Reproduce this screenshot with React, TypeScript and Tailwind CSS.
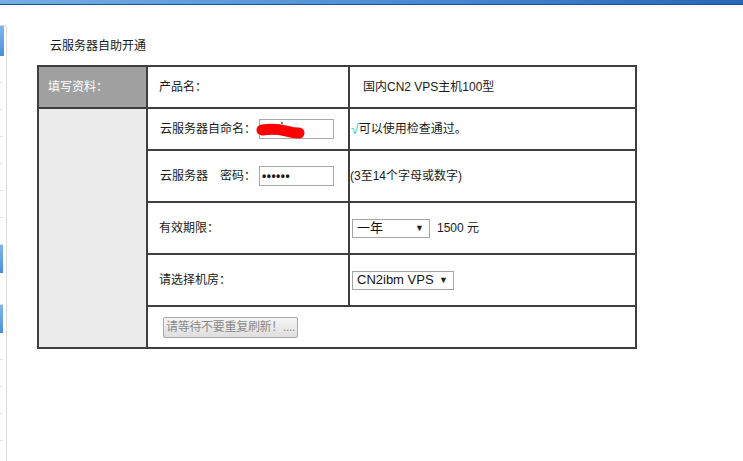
/**
 * App.tsx — 云服务器自助开通 (self-service VPS order form)
 */

const FONT = "font-['Liberation_Sans','Noto_Sans_CJK_SC',sans-serif]";

// ── Fake select box (native selects render differently per browser) ──
function SelectBox({ label, width }: { label: string; width: string }) {
  return (
    <div
      className={`flex h-[19px] items-center justify-between border border-[#a5a5a5] bg-white pl-[4px] pr-[5px] text-[13px] text-[#111] ${width}`}
    >
      <span>{label}</span>
      <span className="text-[9px] leading-none text-[#222]">▼</span>
    </div>
  );
}

export default function App() {
  return (
    <div className={`relative flex h-[461px] w-[743px] flex-col overflow-hidden bg-white text-[12px] text-[#1a1a1a] ${FONT}`}>
      {/* ── Top blue strip ── */}
      <div className="h-[5px] shrink-0 border-b border-[#1d4f9e] bg-gradient-to-r from-[#74aee4] via-[#4f8fd6] to-[#2a64b8]" />

      <div className="flex flex-1">
        {/* ── Left navigation edge ── */}
        <div className="mt-[20px] flex w-[7px] shrink-0 flex-col rounded-tr-[3px] border-r border-t border-[#dcdcdc]">
          <div className="h-[30px] w-[4px] bg-gradient-to-b from-[#7fb6ea] to-[#4b8fd8]" />
          {[0, 1, 2, 3, 4, 5, 6].map((i) => (
            <div key={i} className="h-[27px] w-[3px] border-b border-[#e2e2e2]" />
          ))}
          <div className="h-[28px] w-[3px] bg-gradient-to-b from-[#7fb6ea] to-[#4b8fd8]" />
          <div className="h-[32px] w-[3px] border-b border-[#e2e2e2]" />
          <div className="h-[28px] w-[3px] bg-gradient-to-b from-[#7fb6ea] to-[#4b8fd8]" />
          {[0, 1, 2, 3].map((i) => (
            <div key={i} className="h-[27px] w-[3px] border-b border-[#e2e2e2]" />
          ))}
        </div>

        {/* ── Main content ── */}
        <div className="ml-[30px] pt-[33px]">
          <div className="ml-[13px] h-[16px] text-[12px] leading-[16px]">云服务器自助开通</div>

          <div className="mt-[11px] grid grid-cols-[107px_200px_285px] grid-rows-[40px_40px_50px_50px_50px_40px] gap-[2px] bg-[#3f3f3f] p-[2px]">
            {/* header label */}
            <div className="flex items-center bg-[#a0a0a0] pl-[9px] text-white">填写资料：</div>
            <div className="flex items-center bg-white pl-[11px]">产品名：</div>
            <div className="flex items-center bg-white pl-[13px]">国内CN2 VPS主机100型</div>

            {/* grey side column */}
            <div className="row-span-5 bg-[#ececec]" />

            {/* server name — the value is painted over in red in the screenshot */}
            <div className="relative flex items-center bg-white pl-[12px]">
              <span>云服务器自命名：</span>
              <div className="ml-[3px] h-[20px] w-[75px] border border-[#a9a9a9] bg-white" />
              <svg className="absolute left-[108px] top-[13px]" width="50" height="20" viewBox="0 0 50 20">
                <path
                  d="M6 8 C 14 7, 22 7, 30 9 S 40 11, 43 11"
                  stroke="#ff0000"
                  strokeWidth="11"
                  strokeLinecap="round"
                  fill="none"
                />
                <line x1="26" y1="0" x2="26" y2="2" stroke="#000" strokeWidth="1" />
              </svg>
            </div>
            <div className="flex items-center bg-white pl-[1px]">
              <span className="text-[14px] text-[#1fcccc]">√</span>可以使用检查通过。
            </div>

            {/* password */}
            <div className="flex items-center bg-white pl-[12px]">
              <span>云服务器　密码：</span>
              <div className="ml-[3px] flex h-[20px] w-[75px] items-center border border-[#a9a9a9] bg-white pl-[2px] text-[12px] font-bold tracking-[0.5px]">
                ••••••
              </div>
            </div>
            <div className="flex items-center bg-white">(3至14个字母或数字)</div>

            {/* period */}
            <div className="flex items-center bg-white pl-[11px]">有效期限：</div>
            <div className="flex items-center bg-white pl-[2px]">
              <SelectBox label="一年" width="w-[78px]" />
              <span className="ml-[7px]">1500 元</span>
            </div>

            {/* data center */}
            <div className="flex items-center bg-white pl-[11px]">请选择机房：</div>
            <div className="flex items-center bg-white pl-[2px]">
              <SelectBox label="CN2ibm VPS" width="w-[102px]" />
            </div>

            {/* submit */}
            <div className="col-span-2 flex items-center bg-white pl-[15px]">
              <button
                disabled
                className="flex h-[21px] w-[135px] items-center justify-start overflow-hidden whitespace-nowrap rounded-[2px] border border-[#a8a8a8] bg-gradient-to-b from-[#f6f6f6] to-[#dedede] px-[2px] text-[12px] tracking-[-0.3px] text-[#8a8a8a]"
              >
                请等待不要重复刷新！....
              </button>
            </div>
          </div>
        </div>
      </div>
    </div>
  );
}
